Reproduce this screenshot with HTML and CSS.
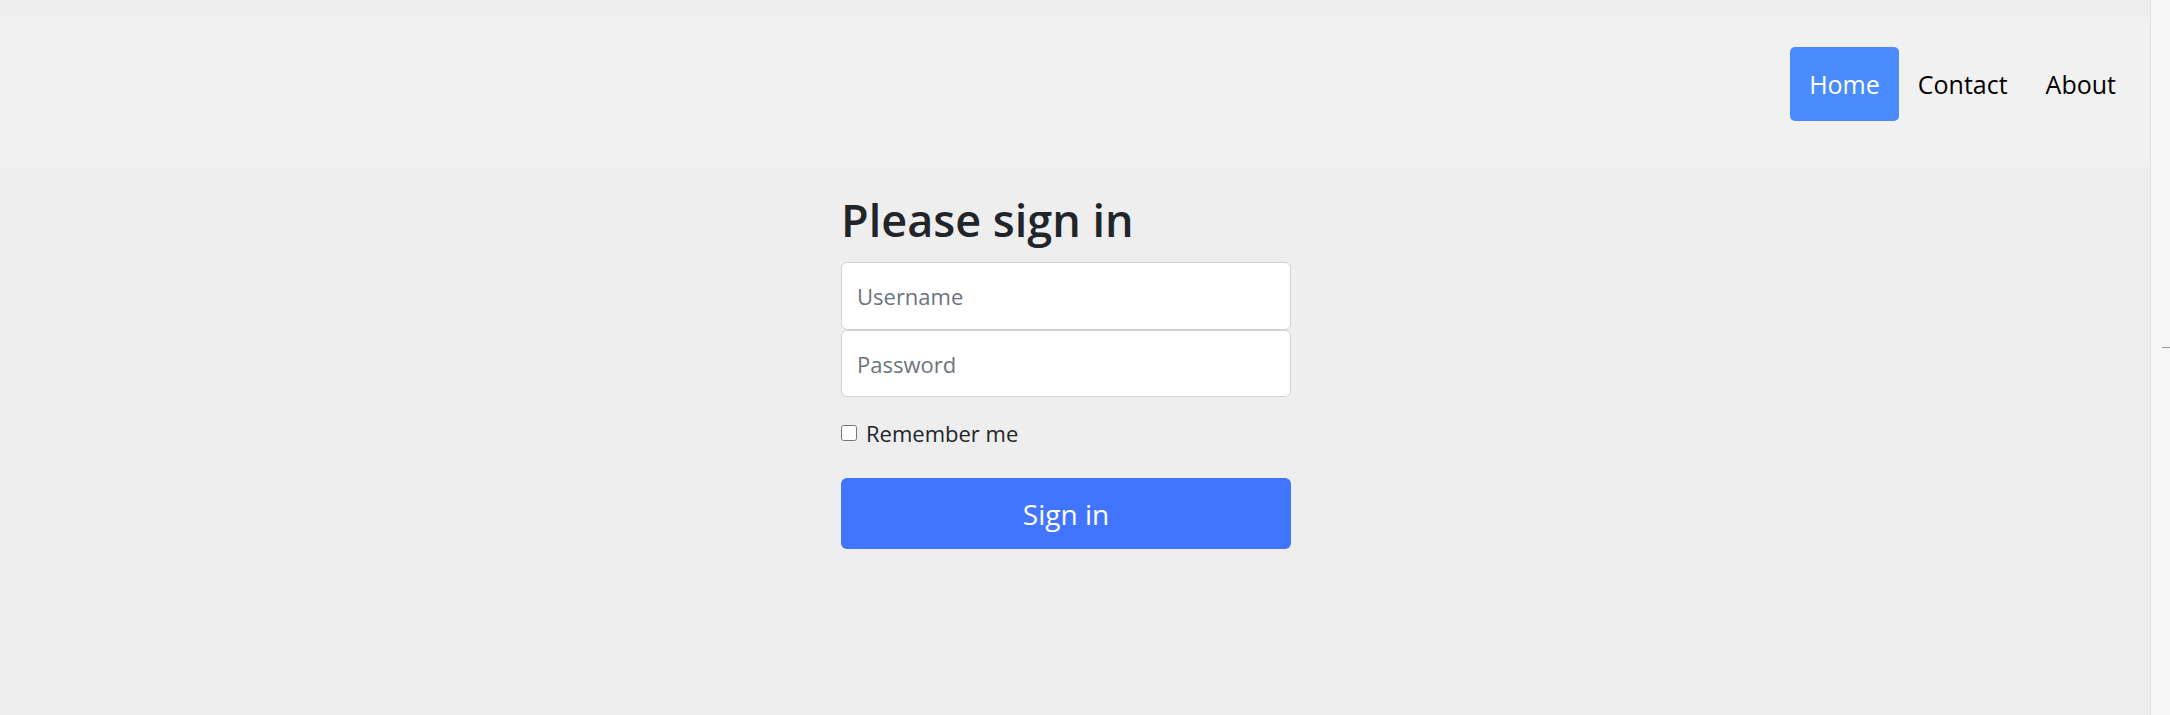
FILE: index.html
```html
<!DOCTYPE html>
<html lang="en">
<head>
<meta charset="utf-8">
<title>Please sign in</title>
<link rel="stylesheet" href="styles.css">
</head>
<body>
<div class="window">
  <div class="page">
    <nav class="navbar">
      <ul class="nav">
        <li><a class="nav-link active" href="#">Home</a></li>
        <li><a class="nav-link" href="#">Contact</a></li>
        <li><a class="nav-link" href="#">About</a></li>
      </ul>
    </nav>
    <main class="main">
      <form class="signin">
        <h1 class="title">Please sign in</h1>
        <div class="fields">
          <input class="field field-top" type="text" placeholder="Username">
          <input class="field field-bottom" type="password" placeholder="Password">
        </div>
        <label class="remember"><input class="check" type="checkbox"><span>Remember me</span></label>
        <button class="submit" type="button">Sign in</button>
      </form>
    </main>
  </div>
  <div class="scrollbar"><span class="tick"></span></div>
</div>
</body>
</html>
```
FILE: styles.css
```css
* { box-sizing: border-box; }
html, body { margin: 0; padding: 0; }
body {
  font-family: "Open Sans", "Noto Sans", sans-serif;
  color: #212529;
}
.window {
  display: flex;
  height: 715px;
  overflow: hidden;
}
.page {
  flex: 1;
  background: #eeeeee;
  padding-top: 17px;
}
.scrollbar {
  width: 20px;
  background: #f6f6f6;
  border-left: 1px solid #e3e3e3;
  padding-top: 347px;
  display: flex;
  justify-content: flex-end;
  align-items: flex-start;
}
.tick {
  width: 8px;
  height: 1px;
  background: #9a9a9a;
}
.navbar {
  height: 150px;
  background: #f1f1f1;
  display: flex;
  justify-content: flex-end;
  align-items: flex-start;
  padding: 30px 15px 0 0;
}
.nav {
  list-style: none;
  margin: 0;
  padding: 0;
  display: flex;
}
.nav-link {
  display: block;
  height: 74px;
  line-height: 74px;
  padding: 0 19px;
  font-size: 25px;
  color: #000;
  text-decoration: none;
  border-radius: 5px;
}
.nav-link.active {
  background: #4a8cff;
  color: #fff;
}
.main {
  display: flex;
  justify-content: center;
  padding-right: 18px;
}
.signin {
  width: 450px;
  display: flex;
  flex-direction: column;
}
.title {
  margin: 26px 0 15px;
  font-size: 45px;
  font-weight: 600;
  line-height: 54px;
  color: #212529;
}
.fields {
  display: flex;
  flex-direction: column;
}
.field {
  height: 68px;
  border: 1px solid #ced4da;
  border-radius: 6px;
  background: #fff;
  padding: 0 15px;
  font-family: inherit;
  font-size: 22px;
  color: #212529;
}
.field-bottom { height: 67px; }
.field::placeholder { color: #6c757d; }
.remember {
  display: flex;
  align-items: center;
  gap: 9px;
  margin-top: 20px;
  font-size: 22px;
  line-height: 32px;
}
.check {
  margin: 0;
  width: 16px;
  height: 16px;
}
.submit {
  margin-top: 29px;
  height: 71px;
  border: 0;
  border-radius: 6px;
  background: #4275ff;
  color: #fff;
  font-family: inherit;
  font-size: 28px;
}
```
